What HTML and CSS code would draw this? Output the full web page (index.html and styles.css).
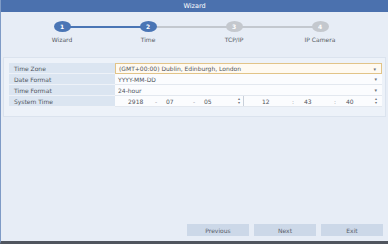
FILE: index.html
```html
<!DOCTYPE html>
<html lang="en">
<head>
    <meta charset="UTF-8">
    <title>Wizard</title>
    <link rel="stylesheet" href="styles.css">
</head>
<body>
    <div class="window">
        <div class="titlebar">Wizard</div>
        <div class="steps">
            <div class="step done"><span class="dot">1</span><span class="step-label">Wizard</span></div>
            <div class="step done current"><span class="dot">2</span><span class="step-label">Time</span></div>
            <div class="step"><span class="dot">3</span><span class="step-label">TCP/IP</span></div>
            <div class="step last"><span class="dot">4</span><span class="step-label">IP Camera</span></div>
        </div>
        <div class="panel">
            <div class="row">
                <div class="label">Time Zone</div>
                <div class="value select focused"><span>(GMT+00:00) Dublin, Edinburgh, London</span><span class="arrow">&#9662;</span></div>
            </div>
            <div class="row">
                <div class="label">Date Format</div>
                <div class="value select"><span>YYYY-MM-DD</span><span class="arrow">&#9662;</span></div>
            </div>
            <div class="row">
                <div class="label">Time Format</div>
                <div class="value select"><span>24-hour</span><span class="arrow">&#9662;</span></div>
            </div>
            <div class="row">
                <div class="label">System Time</div>
                <div class="value time">
                    <div class="spin date">
                        <span class="num">2918</span><span class="sep">-</span>
                        <span class="num">07</span><span class="sep">-</span>
                        <span class="num">05</span>
                        <span class="updown">&#9652;<br>&#9662;</span>
                    </div>
                    <div class="spin clock">
                        <span class="num">12</span><span class="sep">:</span>
                        <span class="num">43</span><span class="sep">:</span>
                        <span class="num">40</span>
                        <span class="updown">&#9652;<br>&#9662;</span>
                    </div>
                </div>
            </div>
        </div>
        <div class="buttons">
            <button class="btn">Previous</button>
            <button class="btn">Next</button>
            <button class="btn">Exit</button>
        </div>
    </div>
</body>
</html>
```

FILE: styles.css
```css
body {
    margin: 0;
    padding: 0;
    font-family: "DejaVu Sans", "Liberation Sans", sans-serif;
    font-size: 6px;
    color: #50555d;
    background: #e7edf6;
}

.window {
    width: 388px;
    height: 244px;
    box-sizing: border-box;
    display: flex;
    flex-direction: column;
    background: #e7edf6;
    border-left: 1px solid #7f9bc6;
    border-bottom: 3px solid #50555e;
}

.titlebar {
    height: 12px;
    line-height: 12px;
    background: #4b71ae;
    color: #ffffff;
    text-align: center;
    font-size: 6.5px;
}

.steps {
    display: flex;
    padding: 9px 0 0 18px;
    height: 36px;
}

.step {
    position: relative;
    width: 86px;
    display: flex;
    flex-direction: column;
    align-items: center;
}

.step::after {
    content: "";
    position: absolute;
    left: 50%;
    width: 86px;
    top: 5px;
    height: 2px;
    background: #c3c8cf;
    z-index: 0;
}

.step.done::after {
    background: #4a75b5;
}

.step.current::after {
    background: #c3c8cf;
}

.step.last::after {
    display: none;
}

.dot {
    position: relative;
    z-index: 1;
    width: 17px;
    height: 11px;
    line-height: 11px;
    border-radius: 50%;
    background: #c4c8ce;
    color: #ffffff;
    text-align: center;
    font-size: 6px;
    font-weight: bold;
}

.step.done .dot {
    background: #4a75b5;
}

.step-label {
    margin-top: 4px;
    font-size: 6px;
    color: #555a62;
}

.panel {
    margin: 0 2px 0 2px;
    padding: 5px 3px 9px 5px;
    background: #edf2f9;
    border: 1px solid #dbe3ee;
}

.row {
    display: flex;
    height: 11px;
}

.label {
    width: 106px;
    padding-left: 5px;
    line-height: 11px;
    background: #dbe5f1;
    border-bottom: 1px solid #eef2f8;
    box-sizing: border-box;
}

.value {
    flex: 1;
    display: flex;
    align-items: center;
    background: #fbfcfe;
    border-bottom: 1px solid #e3e8ef;
    box-sizing: border-box;
}

.select {
    justify-content: space-between;
    padding: 0 5px 0 3px;
}

.focused {
    background: #fffaf1;
    border: 1px solid #e2c488;
}

.arrow {
    color: #6b7078;
    font-size: 5px;
}

.time {
    padding: 0;
}

.spin {
    display: flex;
    align-items: center;
    height: 100%;
}

.date {
    width: 129px;
    padding-left: 13px;
    border-right: 1px solid #c9d0da;
    box-sizing: border-box;
}

.clock {
    flex: 1;
    padding-left: 18px;
}

.num {
    width: 18px;
}

.sep {
    width: 22px;
    text-align: center;
    color: #9aa0a8;
}

.date .sep {
    width: 20px;
}

.clock .num {
    width: 20px;
}

.updown {
    margin-left: auto;
    margin-right: 5px;
    font-size: 4px;
    line-height: 4px;
    color: #6b7078;
}

.date .updown {
    margin-right: 3px;
}

.buttons {
    margin-top: auto;
    display: flex;
    justify-content: flex-end;
    gap: 5px;
    padding: 0 5px 5px 0;
}

.btn {
    width: 62px;
    height: 12px;
    padding: 0;
    border: none;
    background: #ccd8e8;
    color: #5a6068;
    font-family: "DejaVu Sans", "Liberation Sans", sans-serif;
    font-size: 6px;
}
```
